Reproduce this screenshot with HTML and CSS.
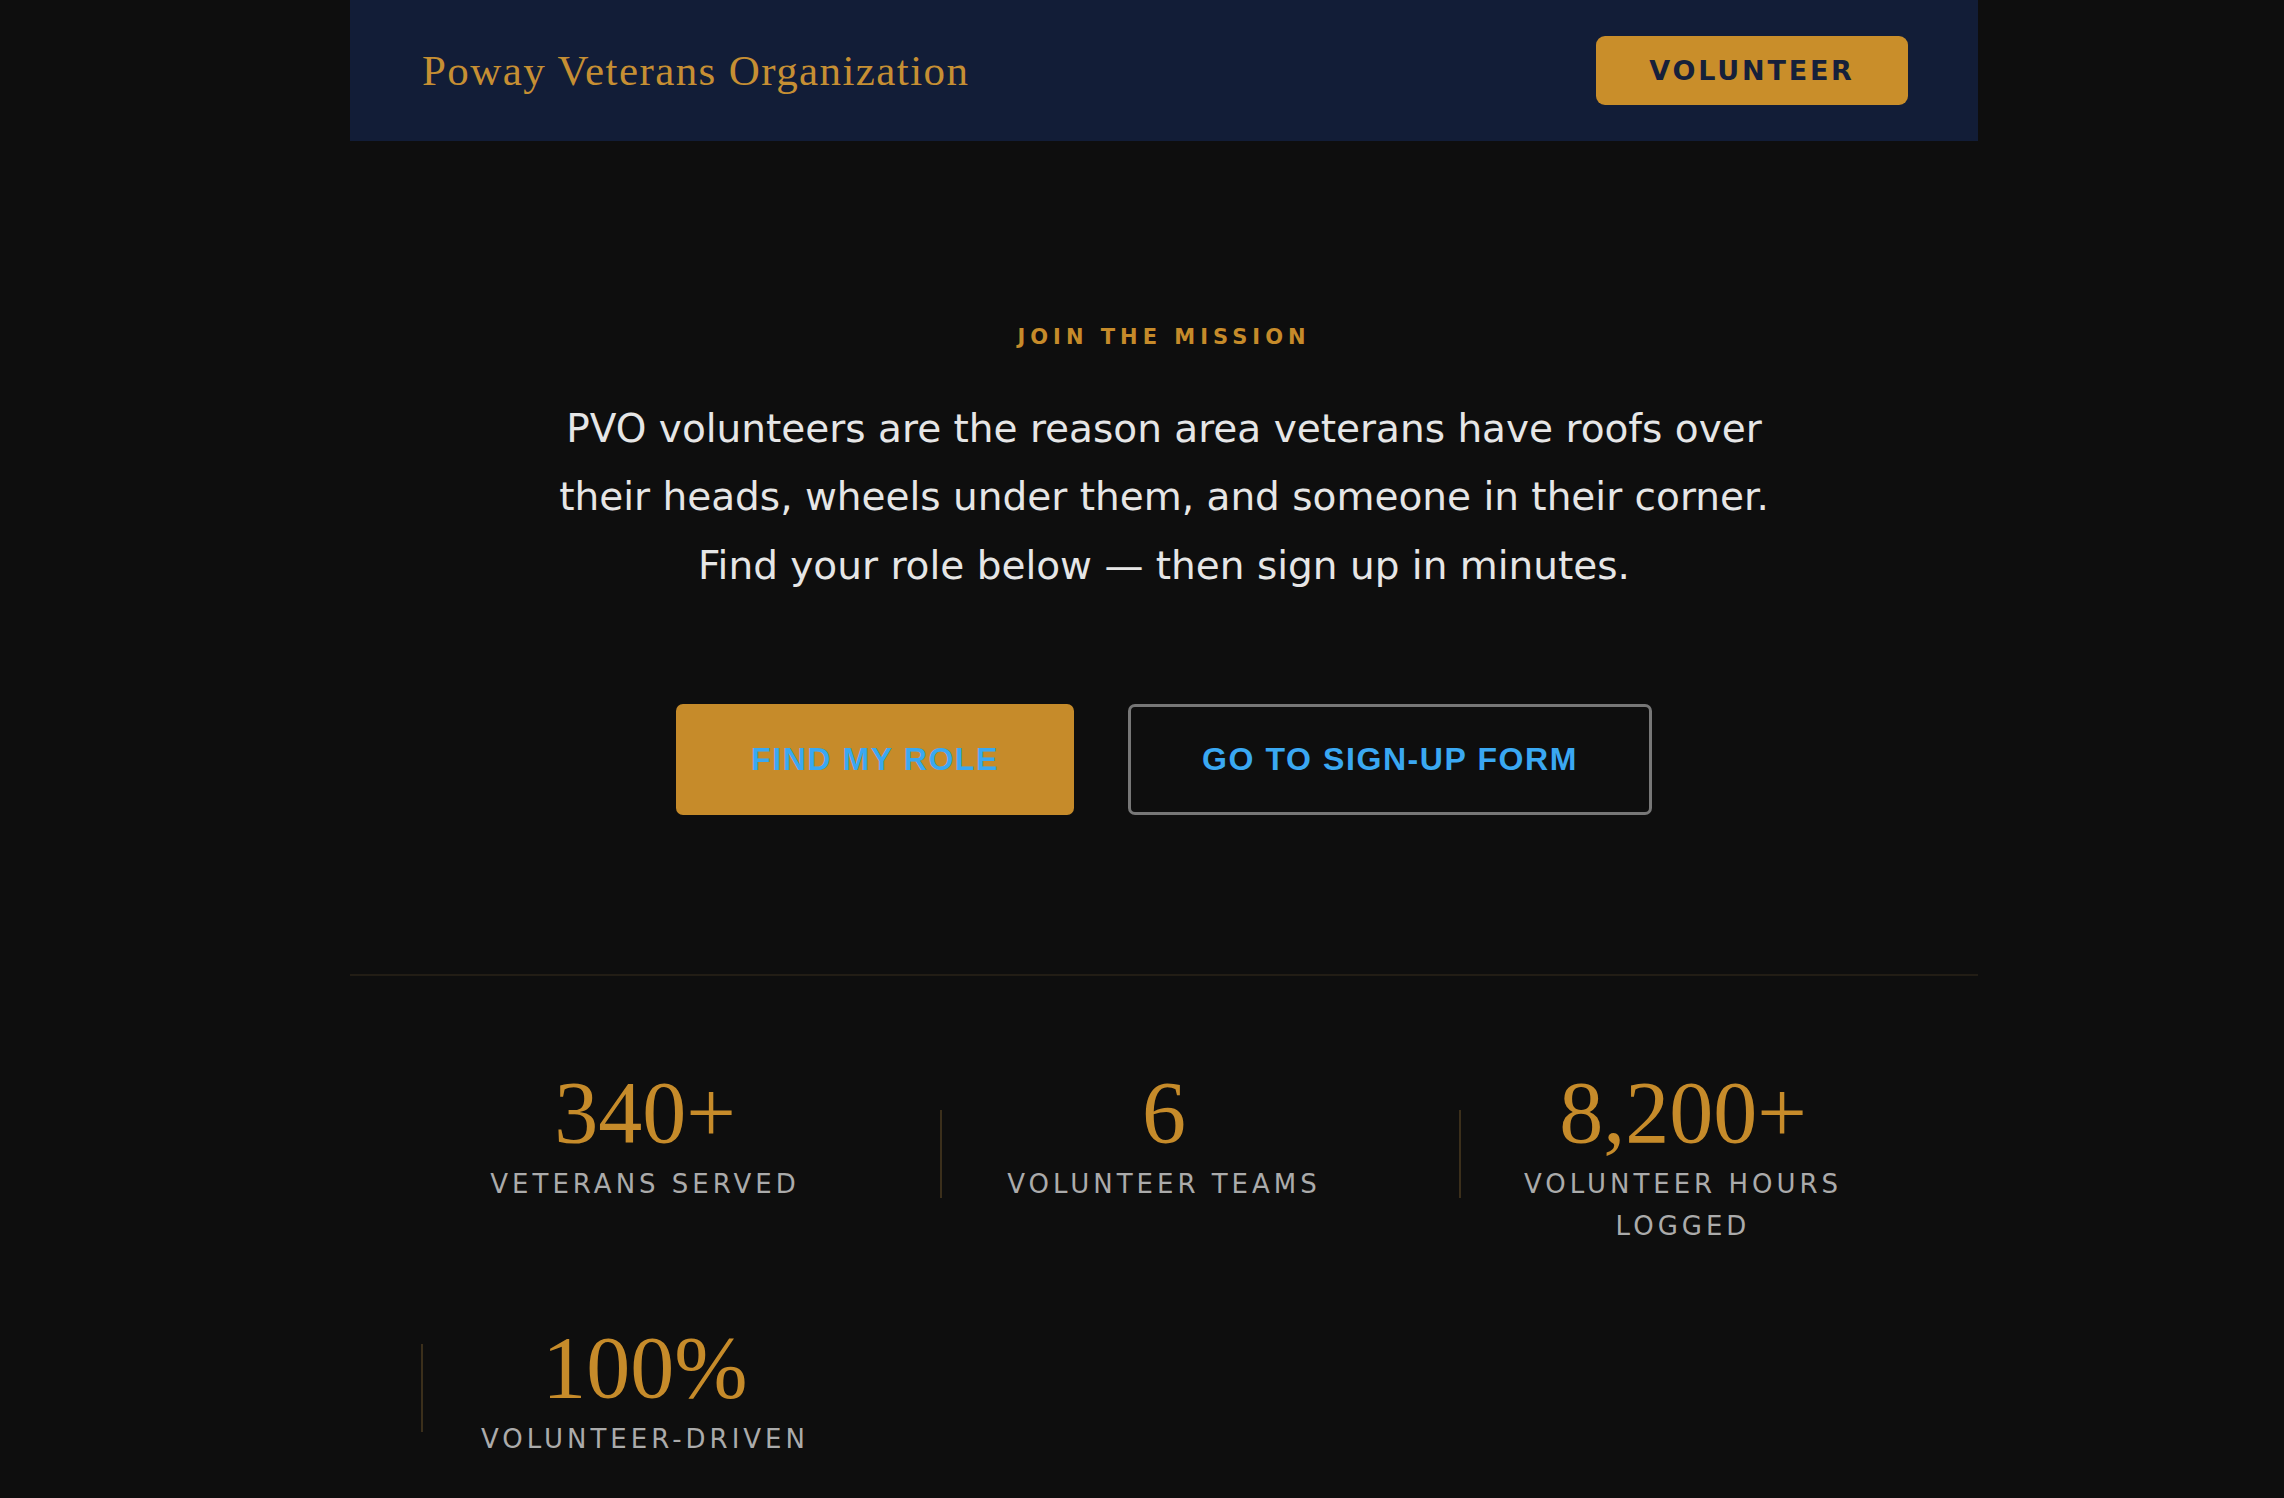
FILE: index.html
```html
<!DOCTYPE html>
<html lang="en">
<head>
<meta charset="utf-8">
<title>Poway Veterans Organization — Volunteer</title>
<link rel="stylesheet" href="styles.css">
</head>
<body>
<div class="page">
  <header class="topbar">
    <div class="brand">Poway Veterans Organization</div>
    <a class="btn-nav" href="#">VOLUNTEER</a>
  </header>

  <section class="hero">
    <div class="eyebrow">JOIN THE MISSION</div>
    <p class="lead">PVO volunteers are the reason area veterans have roofs over their heads, wheels under them, and someone in their corner. Find your role below — then sign up in minutes.</p>
    <div class="actions">
      <button class="btn btn-gold">FIND MY ROLE</button>
      <button class="btn btn-outline">GO TO SIGN-UP FORM</button>
    </div>
  </section>

  <section class="stats">
    <div class="stat">
      <div class="num">340+</div>
      <div class="label">VETERANS SERVED</div>
    </div>
    <div class="stat">
      <div class="num">6</div>
      <div class="label">VOLUNTEER TEAMS</div>
    </div>
    <div class="stat">
      <div class="num">8,200+</div>
      <div class="label">VOLUNTEER HOURS LOGGED</div>
    </div>
    <div class="stat">
      <div class="num">100%</div>
      <div class="label">VOLUNTEER-DRIVEN</div>
    </div>
  </section>
</div>
</body>
</html>
```

FILE: styles.css
```css
html, body {
  margin: 0;
  padding: 0;
}

body {
  background: #0e0e0e;
  font-family: "DejaVu Sans", Verdana, sans-serif;
  color: #e6e6e6;
  padding-left: 44px;
  min-height: 1498px;
  box-sizing: border-box;
}

.page {
  width: 1628px;
  margin: 0 auto;
}

.topbar {
  height: 141px;
  background: #121d37;
  display: flex;
  align-items: center;
  justify-content: space-between;
  padding: 0 70px 0 72px;
  box-sizing: border-box;
}

.brand {
  font-family: "Liberation Serif", "Times New Roman", serif;
  font-size: 43px;
  letter-spacing: 1.4px;
  color: #c68f33;
}

.btn-nav {
  display: flex;
  align-items: center;
  justify-content: center;
  width: 312px;
  height: 69px;
  box-sizing: border-box;
  border-radius: 9px;
  background: #c98e2a;
  color: #16203a;
  font-family: "DejaVu Sans", Verdana, sans-serif;
  font-weight: bold;
  font-size: 27px;
  letter-spacing: 2.8px;
  text-decoration: none;
}

.hero {
  text-align: center;
  padding-top: 184px;
  padding-bottom: 159px;
}

.eyebrow {
  font-size: 21px;
  line-height: 25px;
  font-weight: bold;
  letter-spacing: 5px;
  color: #c68b2a;
}

.lead {
  margin: 45px auto 0;
  max-width: 1275px;
  font-size: 39px;
  line-height: 68.4px;
  color: #e6e6e6;
}

.actions {
  margin-top: 104px;
  display: flex;
  justify-content: center;
  gap: 54px;
}

.btn {
  height: 111px;
  padding: 0;
  border-radius: 7px;
  font-family: "Liberation Sans", Arial, sans-serif;
  font-weight: bold;
  font-size: 32px;
  letter-spacing: 1.6px;
  white-space: nowrap;
  color: #3aa8f2;
  cursor: pointer;
  box-sizing: border-box;
}

.btn-gold {
  background: #c68b2a;
  border: 3px solid #c68b2a;
  width: 398px;
}

.btn-outline {
  background: transparent;
  border: 3px solid #777777;
  width: 524px;
}

.stats {
  border-top: 2px solid #221d15;
  padding: 93px 71px 0;
  display: grid;
  grid-template-columns: repeat(3, 1fr);
  column-gap: 71px;
  row-gap: 77px;
}

.stat {
  position: relative;
  text-align: center;
}

.stat:not(:first-child)::before {
  content: "";
  position: absolute;
  left: 0;
  top: 50%;
  width: 2px;
  height: 88px;
  transform: translateY(-50%);
  margin-top: -4px;
  background: #3b2f1b;
}

.num {
  font-family: "Liberation Serif", "Times New Roman", serif;
  font-size: 88px;
  line-height: 88px;
  color: #c68b2a;
}

.label {
  margin-top: 6px;
  font-size: 26px;
  line-height: 42px;
  letter-spacing: 4px;
  color: #ababab;
  padding: 0 12px;
}
```
